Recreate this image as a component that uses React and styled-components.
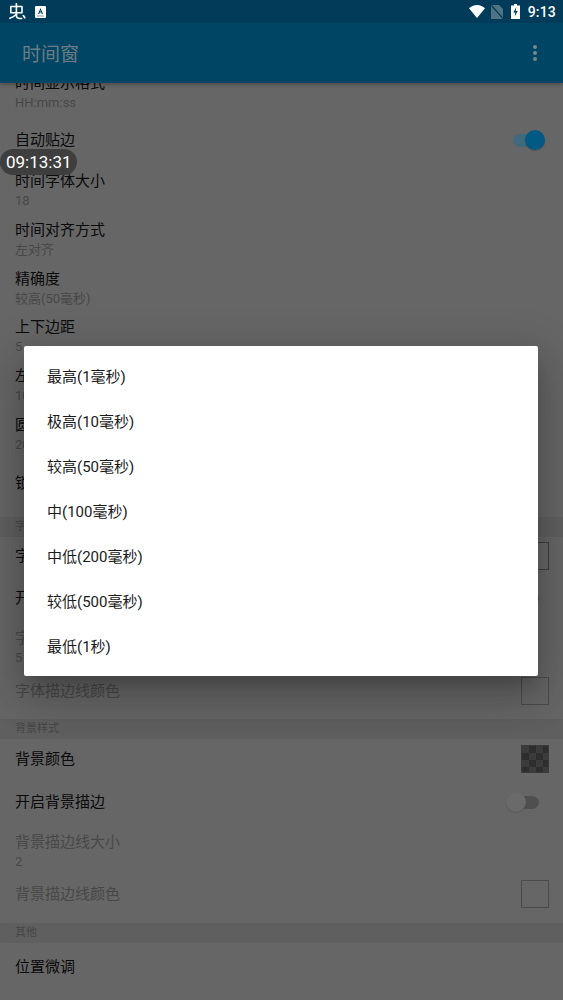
import React from "react";
import styled, { createGlobalStyle } from "styled-components";

const Global = createGlobalStyle`
  html, body { margin: 0; padding: 0; background: #666; }
  body { font-family: Roboto, "Noto Sans CJK SC", sans-serif; }
`;

const Screen = styled.div`
  position: relative;
  width: 563px;
  height: 1000px;
  overflow: hidden;
  background: #666666;
`;

const Header = styled.header`
  position: relative;
  z-index: 2;
  box-shadow: 0 1px 4px rgba(0, 0, 0, 0.35);
`;

const StatusBar = styled.div`
  height: 23px;
  background: #003c59;
  display: flex;
  align-items: center;
  padding: 0 7px 0 9px;
  color: #fff;
`;

const StatusLeft = styled.div`
  display: flex;
  align-items: center;
  gap: 9px;
  flex: 1;
`;

const StatusRight = styled.div`
  display: flex;
  align-items: center;
`;

const Clock = styled.span`
  font-size: 14px;
  font-weight: 500;
  letter-spacing: 0.2px;
  margin-left: 8px;
`;

const Toolbar = styled.div`
  height: 60px;
  background: #004563;
  display: flex;
  align-items: center;
  justify-content: space-between;
  padding: 0 26px 0 22px;
`;

const ToolbarTitle = styled.h1`
  margin: 0 0 2px;
  font-size: 19px;
  font-weight: 400;
  color: #6b7c85;
`;

const List = styled.main`
  margin-top: -24px;
`;

const Row = styled.div`
  box-sizing: border-box;
  height: ${(p) => p.$h}px;
  padding: ${(p) => p.$top}px 14.5px 0 15px;
  display: flex;
  justify-content: space-between;
  align-items: flex-start;
`;

const TextCol = styled.div`
  display: flex;
  flex-direction: column;
`;

const Title = styled.div`
  font-size: 15px;
  line-height: 24px;
  height: 24px;
  color: ${(p) => (p.$off ? "#484848" : "#0a0a0a")};
`;

const Sub = styled.div`
  font-size: 13px;
  line-height: 15px;
  height: 15px;
  color: #484848;
`;

const Category = styled.div`
  box-sizing: border-box;
  height: 20px;
  padding: 0 15px;
  background: #5f5f5f;
  font-size: 11px;
  line-height: 20px;
  color: #464646;
`;

const Control = styled.div`
  height: 24px;
  display: flex;
  align-items: center;
  justify-content: flex-end;
`;

const Swatch = styled.div`
  box-sizing: border-box;
  width: 28px;
  height: 28px;
  border: 1.5px solid ${(p) => p.$border};
`;

const CheckSwatch = styled(Swatch)`
  background: conic-gradient(#2e2e2e 25%, #3b3b3b 0 50%, #2e2e2e 0 75%, #3b3b3b 0) 0 0 / 14px 14px;
`;

const SwitchTrack = styled.div`
  position: relative;
  width: 26px;
  height: 13px;
  border-radius: 7px;
  margin-right: 9.5px;
  background: ${(p) => (p.$on ? "#40697c" : "#4f4f4f")};
`;

const SwitchThumb = styled.div`
  position: absolute;
  top: -3.5px;
  ${(p) => (p.$on ? "right: -6px;" : "left: -7px;")}
  width: 20px;
  height: 20px;
  border-radius: 50%;
  background: ${(p) => (p.$on ? "#005a84" : "#6a6a6a")};
  box-shadow: 0 1px 1px rgba(70, 70, 70, 0.5);
`;

const Pill = styled.div`
  position: absolute;
  z-index: 5;
  left: 0;
  top: 149px;
  height: 26px;
  width: 77px;
  box-sizing: border-box;
  border-radius: 13px;
  background: #3e3e3e;
  color: #fff;
  font-size: 17px;
  line-height: 26px;
  padding-left: 6px;
  white-space: nowrap;
`;

const Overlay = styled.div`
  position: absolute;
  z-index: 4;
  left: 0;
  right: 1px;
  top: 23px;
  bottom: 1px;
  display: flex;
  align-items: center;
  justify-content: center;
`;

const Dialog = styled.div`
  box-sizing: border-box;
  width: 514px;
  padding: 8px 0 7px;
  background: #fff;
  border-radius: 2px;
  box-shadow: 0 11px 15px -7px rgba(0, 0, 0, 0.2), 0 24px 38px 3px rgba(0, 0, 0, 0.14), 0 9px 46px 8px rgba(0, 0, 0, 0.12);
`;

const Option = styled.div`
  box-sizing: border-box;
  height: 45px;
  padding: 1px 0 0 23px;
  line-height: 44px;
  font-size: 15px;
  color: #1a1a1a;
`;

const Switch = ({ on }) => (
  <SwitchTrack $on={on}>
    <SwitchThumb $on={on} />
  </SwitchTrack>
);

const Item = ({ title, sub, off, h = 49, top = 12, children }) => (
  <Row $h={h} $top={top}>
    <TextCol>
      <Title $off={off}>{title}</Title>
      {sub && <Sub>{sub}</Sub>}
    </TextCol>
    {children && <Control>{children}</Control>}
  </Row>
);

const options = ["最高(1毫秒)", "极高(10毫秒)", "较高(50毫秒)", "中(100毫秒)", "中低(200毫秒)", "较低(500毫秒)", "最低(1秒)"];

const BugLogo = () => (
  <svg width="17" height="18" viewBox="0 0 17 18" fill="none" stroke="#fff" strokeWidth="1.6">
    <path d="M1.8 3.5h11.2v6.3H1.8z" strokeLinejoin="round" />
    <path d="M7.4 0.3v12.2c0 2.2 1.5 3 3.5 3h1.8" strokeLinecap="round" />
    <path d="M0.8 15.2c2.5-.5 4.5-1.7 6.6-3.9" strokeLinecap="round" />
    <path d="M14.3 12.5l1.500 2.300" strokeLinecap="round" />
  </svg>
);

const AppBadge = () => (
  <svg width="11" height="12" viewBox="0 0 11 12">
    <rect width="11" height="12" rx="1" fill="#fff" />
    <path d="M5.5 2 3 8h1.3l.5-1.400h1.400l.5 1.400H8zM5.100 5.600l.4-1.400.4 1.400z" fill="#00405c" />
    <rect x="2" y="9.5" width="7" height="1" fill="#7f9fad" />
  </svg>
);

const Wifi = () => (
  <svg width="16" height="13" viewBox="0 0 16 13"><path d="M0 3.3C2 1.300 4.800 0 8 0s6 1.300 8 3.300L8 13z" fill="#fff" /></svg>
);

const NoSim = () => (
  <svg width="12" height="14" viewBox="0 0 12 14" style={{ marginLeft: 6 }}>
    <path d="M0 0h8l4 4v10H0z" fill="#4f7285" />
    <path d="M0.5 0.5 12 13.500" stroke="#003c59" strokeWidth="1.2" />
  </svg>
);

const Battery = () => (
  <svg width="9" height="15" viewBox="0 0 9 15" style={{ marginLeft: 8 }}>
    <path d="M3 0h3v1.500h3V15H0V1.500h3z" fill="#fff" />
    <path d="M5.3 3 2.300 8.500h2L3.700 12.500l3-5.500h-2z" fill="#003c59" />
  </svg>
);

const Dots = () => (
  <svg width="4" height="16" viewBox="0 0 4 16" fill="#77868e">
    <circle cx="2" cy="2" r="2" /><circle cx="2" cy="8" r="2" /><circle cx="2" cy="14" r="2" />
  </svg>
);

export default function App() {
  return (
    <Screen>
      <Global />
      <Header>
        <StatusBar>
          <StatusLeft><BugLogo /><AppBadge /></StatusLeft>
          <StatusRight><Wifi /><NoSim /><Battery /><Clock>9:13</Clock></StatusRight>
        </StatusBar>
        <Toolbar>
          <ToolbarTitle>时间窗</ToolbarTitle>
          <Dots />
        </Toolbar>
      </Header>
      <List>
        <Item title="时间显示格式" sub="HH:mm:ss" />
        <Item title="自动贴边" top={20}><Switch on /></Item>
        <Item title="时间字体大小" sub="18" />
        <Item title="时间对齐方式" sub="左对齐" />
        <Item title="精确度" sub="较高(50毫秒)" h={48} />
        <Item title="上下边距" sub="5" />
        <Item title="左右边距" sub="10" />
        <Item title="圆角大小" sub="20" />
        <Item title="锁定位置" h={67} top={21} />
        <Category>字体样式</Category>
        <Item title="字体颜色" h={37} top={7}><Swatch $border="#3e3e3e" /></Item>
        <Item title="开启字体描边" h={40} top={12}><Switch /></Item>
        <Item title="字体描边线大小" sub="5" off />
        <Item title="字体描边线颜色" off h={56} top={16}><Swatch $border="#4b4b4b" /></Item>
        <Category>背景样式</Category>
        <Item title="背景颜色" h={40} top={8}><CheckSwatch $border="#3a3a3a" /></Item>
        <Item title="开启背景描边" h={39} top={11}><Switch /></Item>
        <Item title="背景描边线大小" sub="2" off />
        <Item title="背景描边线颜色" off h={56} top={15}><Swatch $border="#4b4b4b" /></Item>
        <Category>其他</Category>
        <Item title="位置微调" h={58} top={12} />
      </List>
      <Pill>09:13:31</Pill>
      <Overlay>
        <Dialog>
          {options.map((o) => <Option key={o}>{o}</Option>)}
        </Dialog>
      </Overlay>
    </Screen>
  );
}
